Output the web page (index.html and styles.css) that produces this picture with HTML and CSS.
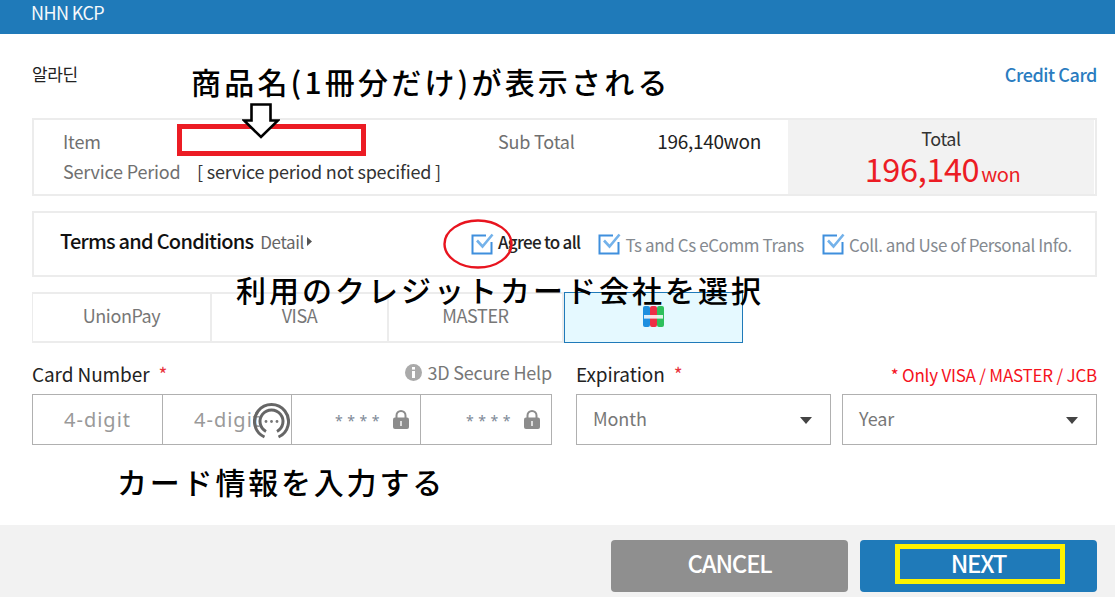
FILE: index.html
```html
<!DOCTYPE html>
<html lang="en">
<head>
<meta charset="utf-8">
<title>NHN KCP</title>
<link rel="stylesheet" href="styles.css">
</head>
<body>
<div class="page">
  <header class="topbar">NHN KCP</header>
  <main class="content">
    <div class="title-row">
      <span class="merchant">알라딘</span>
      <span class="method">Credit Card</span>
    </div>
    <section class="summary">
      <div class="item-info">
        <div class="info-row"><span class="info-label">Item</span></div>
        <div class="info-row"><span class="info-label">Service Period</span><span class="info-value">[ service period not specified ]</span></div>
      </div>
      <div class="subtotal"><span class="info-label">Sub Total</span><span class="subtotal-value">196,140won</span></div>
      <div class="total">
        <div class="total-label">Total</div>
        <div class="total-value">196,140<span class="total-unit">won</span></div>
      </div>
    </section>
    <section class="terms">
      <div class="terms-title">Terms and Conditions</div>
      <div class="terms-detail">Detail<svg class="tri" width="5" height="9" viewBox="0 0 5 9"><path d="M0 0L5 4.5L0 9Z" fill="#555"/></svg></div>
      <div class="checks">
        <label class="check check-all">
          <svg class="box" width="23" height="22" viewBox="0 0 23 22"><path d="M20.5 9V20.5H1.5V2.5H15" fill="none" stroke="#3f8fdd" stroke-width="2"/><path d="M6 7.5L11.5 13.5L21.5 1.5" fill="none" stroke="#74b2ea" stroke-width="2.6"/></svg>
          <span>Agree to all</span>
        </label>
        <label class="check">
          <svg class="box" width="23" height="22" viewBox="0 0 23 22"><path d="M20.5 9V20.5H1.5V2.5H15" fill="none" stroke="#3f8fdd" stroke-width="2"/><path d="M6 7.5L11.5 13.5L21.5 1.5" fill="none" stroke="#74b2ea" stroke-width="2.6"/></svg>
          <span>Ts and Cs eComm Trans</span>
        </label>
        <label class="check">
          <svg class="box" width="23" height="22" viewBox="0 0 23 22"><path d="M20.5 9V20.5H1.5V2.5H15" fill="none" stroke="#3f8fdd" stroke-width="2"/><path d="M6 7.5L11.5 13.5L21.5 1.5" fill="none" stroke="#74b2ea" stroke-width="2.6"/></svg>
          <span>Coll. and Use of Personal Info.</span>
        </label>
      </div>
    </section>
    <nav class="tabs">
      <div class="tab tab-a">UnionPay</div>
      <div class="tab tab-b">VISA</div>
      <div class="tab tab-c">MASTER</div>
      <div class="tab tab-on">
        <svg width="21" height="21" viewBox="0 0 21 21"><rect x="0" y="0" width="7" height="21" rx="2" fill="#1d8fe0"/><rect x="7" y="0" width="7" height="21" rx="2" fill="#ee2f45"/><rect x="14" y="0" width="7" height="21" rx="2" fill="#2fc05c"/><rect x="1" y="9" width="19" height="3.6" fill="#fff" opacity=".85"/></svg>
      </div>
    </nav>
    <section class="form">
      <div class="col-card">
        <div class="label-row">
          <span class="field-label">Card Number<span class="req">*</span></span>
          <span class="help"><svg width="17" height="17" viewBox="0 0 17 17"><circle cx="8.5" cy="8.5" r="8.5" fill="#aaa"/><rect x="7" y="7" width="3" height="7" fill="#fff"/><rect x="7" y="3" width="3" height="2.6" fill="#fff"/></svg>3D Secure Help</span>
        </div>
        <div class="card-inputs">
          <div class="cell cell-1">4-digit</div>
          <div class="cell cell-2">4-digit</div>
          <div class="cell cell-3"><span class="stars">* * * *</span><svg class="lock" width="16" height="19" viewBox="0 0 16 19"><path d="M3.5 8V5.5a4.5 4.5 0 0 1 9 0V8" fill="none" stroke="#8c8c8c" stroke-width="2"/><rect y="7.5" width="16" height="11.5" rx="2" fill="#8c8c8c"/><rect x="7" y="11" width="2" height="5" fill="#ddd"/></svg></div>
          <div class="cell cell-4"><span class="stars">* * * *</span><svg class="lock" width="16" height="19" viewBox="0 0 16 19"><path d="M3.5 8V5.5a4.5 4.5 0 0 1 9 0V8" fill="none" stroke="#8c8c8c" stroke-width="2"/><rect y="7.5" width="16" height="11.5" rx="2" fill="#8c8c8c"/><rect x="7" y="11" width="2" height="5" fill="#ddd"/></svg></div>
        </div>
      </div>
      <div class="col-exp">
        <div class="label-row">
          <span class="field-label">Expiration<span class="req">*</span></span>
          <span class="only">* Only VISA / MASTER / JCB</span>
        </div>
        <div class="selects">
          <div class="select">Month<i class="caret"></i></div>
          <div class="select">Year<i class="caret"></i></div>
        </div>
      </div>
    </section>
  </main>
  <footer class="footer">
    <div class="btn btn-cancel">CANCEL</div>
    <div class="btn btn-next">NEXT</div>
  </footer>

  <div class="note note-1">商品名(1冊分だけ)が表示される</div>
  <div class="note note-2">利用のクレジットカード会社を選択</div>
  <div class="note note-3">カード情報を入力する</div>
  <div class="mark-red"></div>
  <div class="mark-yellow"></div>
  <svg class="mark-arrow" width="38" height="36" viewBox="0 0 38 36"><path d="M9.5 1.5H28.5V17.5H36L19 34L2 17.5H9.5Z" fill="#fff" stroke="#000" stroke-width="2.6"/></svg>
  <svg class="mark-ellipse" width="70" height="50" viewBox="0 0 70 50"><ellipse cx="35" cy="25" rx="33.5" ry="23.5" fill="none" stroke="#e8141f" stroke-width="2.4"/></svg>
  <svg class="mark-loader" width="37" height="37" viewBox="0 0 37 37"><path d="M11.5 35A17 17 0 1 1 25.5 35" fill="none" stroke="#666" stroke-width="3"/><path d="M13 29.5A11.5 11.5 0 1 1 24 29.5" fill="none" stroke="#666" stroke-width="3"/><circle cx="13" cy="19.5" r="1.4" fill="#777"/><circle cx="18.5" cy="19.5" r="1.4" fill="#777"/><circle cx="24" cy="19.5" r="1.4" fill="#777"/></svg>
</div>
</body>
</html>
```
FILE: styles.css
```css
* { box-sizing: border-box; }
html, body { margin: 0; padding: 0; background: #fff; }
body { font-family: "Noto Sans CJK KR", "Noto Sans", sans-serif; color: #222; letter-spacing: -0.4px; }
.page { position: relative; width: 1115px; height: 597px; overflow: hidden; display: flex; flex-direction: column; }

.topbar { height: 34px; flex: none; background: #1f7ab9; color: #f4f8fb; font-size: 18px; line-height: 25px; padding-left: 31px; letter-spacing: -0.6px; }
.content { flex: 1; padding: 0 18px 0 32px; }

.title-row { height: 84px; display: flex; justify-content: space-between; padding-top: 28px; font-size: 17px; line-height: 24px; }
.merchant { color: #222; }
.method { color: #2a7cc0; font-size: 18px; font-weight: 500; letter-spacing: -0.45px; }

.summary { height: 78px; border: 2px solid #ececec; display: flex; padding-right: 1px; }
.item-info { width: 464px; padding: 6px 0 0 29px; }
.info-row { display: flex; height: 30px; line-height: 30px; font-size: 18px; }
.info-label { color: #707070; font-size: 18px; line-height: 30px; letter-spacing: -0.2px; }
.item-info .info-label { width: 134px; }
.info-value { color: #333; letter-spacing: -0.2px; }
.subtotal { width: 290px; display: flex; justify-content: space-between; padding: 6px 27px 0 0; font-size: 19px; line-height: 30px; }
.subtotal-value { color: #222; letter-spacing: -0.3px; }
.total { flex: 1; background: #f2f2f2; text-align: center; }
.total-label { color: #333; font-size: 18px; line-height: 26px; margin-top: 5px; }
.total-value { color: #ec1c24; font-size: 32.5px; line-height: 33px; font-weight: 400; letter-spacing: -0.4px; padding-left: 3px; }
.total-unit { font-size: 20px; margin-left: 2px; }

.terms { margin-top: 15px; height: 66px; border: 2px solid #ececec; display: flex; align-items: center; padding-left: 26px; }
.terms-title { font-size: 20px; font-weight: 500; color: #111; letter-spacing: -0.75px; margin-top: -7px; }
.terms-detail { font-size: 17px; color: #666; margin-left: 7px; margin-top: -5px; display: flex; align-items: center; gap: 3px; letter-spacing: -0.4px; }
.tri { flex: none; }
.checks { margin-left: 159px; display: flex; gap: 18px; font-size: 17px; color: #858a90; }
.check { display: flex; align-items: center; gap: 4px; white-space: nowrap; }
.check-all { color: #222; font-size: 17px; font-weight: 500; letter-spacing: -0.7px; }
.check-all span { margin-top: -5px; }

.tabs { margin-top: 15px; height: 51px; display: flex; font-size: 18px; color: #777; }
.tab { border: 2px solid #ececec; border-left: 0; display: flex; align-items: center; justify-content: center; }
.tab-a { width: 180px; border-left: 1px solid #ececec; padding-bottom: 5px; }
.tab-b { width: 177px; padding-bottom: 6px; }
.tab-c { width: 175px; padding-bottom: 6px; }
.tab-on { width: 179px; border: 1px solid #1f7ab9; background: #e5f9ff; padding-bottom: 3px; }

.form { margin-top: 17px; display: flex; gap: 24px; }
.col-card { width: 520px; }
.col-exp { flex: 1; }
.label-row { height: 34px; display: flex; justify-content: space-between; align-items: flex-start; }
.field-label { font-size: 19px; line-height: 28px; color: #222; letter-spacing: -0.1px; }
.req { color: #e8333c; margin-left: 9px; font-size: 19px; }
.help { display: flex; align-items: center; gap: 5px; font-size: 18px; line-height: 25px; color: #777; letter-spacing: -0.2px; }
.only { font-size: 17px; line-height: 30px; color: #f5121c; letter-spacing: -0.22px; }

.card-inputs { height: 51px; display: flex; border: 1px solid #b0b0b0; }
.cell { flex: 1; border-left: 1px solid #b0b0b0; color: #999; font-size: 20px; letter-spacing: 1px; font-family: "Noto Sans", sans-serif; display: flex; align-items: center; justify-content: flex-start; }
.cell-1 { border-left: 0; width: 129px; flex: none; padding-left: 31px; }
.cell-2 { width: 129px; flex: none; padding-left: 31px; }
.cell-3 { width: 129px; flex: none; justify-content: flex-end; padding-right: 11px; }
.cell-4 { padding-right: 11px; justify-content: flex-end; }
.stars { font-size: 14px; letter-spacing: 0.45px; margin-right: 13px; padding-top: 2px; color: #7d8896; }
.lock { flex: none; }

.selects { display: flex; gap: 11px; }
.select { flex: 1; height: 51px; border: 1px solid #b0b0b0; display: flex; align-items: center; justify-content: space-between; padding: 0 18px 3px 16px; font-size: 18px; color: #777; letter-spacing: -0.1px; }
.caret { width: 0; height: 0; border-left: 6.5px solid transparent; border-right: 6.5px solid transparent; border-top: 7px solid #444; margin-top: 5px; }

.footer { height: 72px; flex: none; background: #f2f2f2; display: flex; justify-content: flex-end; gap: 12px; padding: 15px 18px 5px 0; }
.btn { width: 237px; height: 52px; border-radius: 4px; color: #fff; font-size: 24px; font-weight: 500; text-align: center; line-height: 46px; letter-spacing: -1.2px; }
.btn-cancel { background: #8f8f8f; }
.btn-next { background: #1f7ab9; }

.note { position: absolute; font-family: "Noto Sans CJK JP", sans-serif; font-weight: 500; color: #000; white-space: nowrap; font-size: 30px; line-height: 40px; }
.note-1 { left: 191px; top: 61px; letter-spacing: 3.2px; }
.note-2 { left: 236px; top: 269px; letter-spacing: 3px; }
.note-3 { left: 117px; top: 461px; letter-spacing: 2.8px; }
.mark-red { position: absolute; left: 177px; top: 124px; width: 189px; height: 32px; border: 5px solid #ec1c24; }
.mark-yellow { position: absolute; left: 895px; top: 544px; width: 170px; height: 40px; border: 5px solid #fff200; }
.mark-arrow { position: absolute; left: 242px; top: 103px; }
.mark-ellipse { position: absolute; left: 443px; top: 219px; }
.mark-loader { position: absolute; left: 253px; top: 402px; }
```
